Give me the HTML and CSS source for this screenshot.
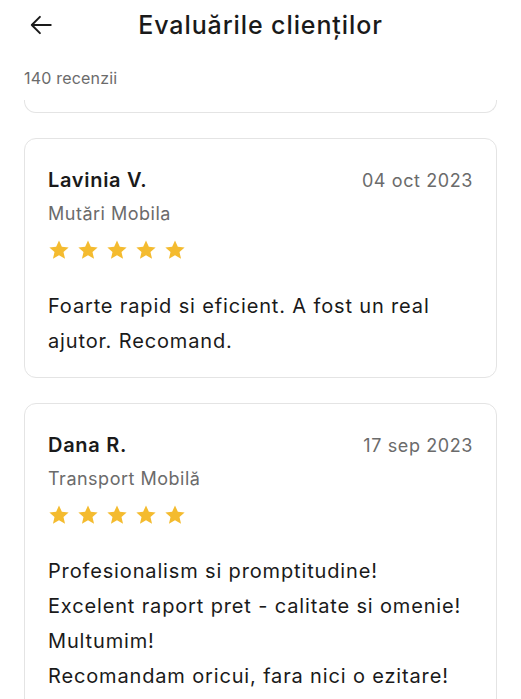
FILE: index.html
```html
<!DOCTYPE html>
<html lang="ro">
<head>
    <meta charset="UTF-8">
    <meta name="viewport" content="width=device-width, initial-scale=1.0">
    <title>Evaluările clienților</title>
    <link rel="stylesheet" href="styles.css">
</head>
<body>
    <header class="top-bar">
        <svg class="back-icon" viewBox="0 0 24 24" width="26" height="26">
            <path d="M21 12H3.5M11 4.5L3.5 12l7.5 7.5" fill="none" stroke="#1a1a1a" stroke-width="1.8" stroke-linecap="round" stroke-linejoin="round"/>
        </svg>
        <h1 class="page-title">Evaluările clienților</h1>
    </header>

    <main class="reviews">
        <div class="review-count">140 recenzii</div>

        <!-- previous card, scrolled up -->
        <div class="card card-cut"></div>

        <div class="card">
            <div class="card-head">
                <span class="reviewer">Lavinia V.</span>
                <span class="review-date">04 oct 2023</span>
            </div>
            <div class="service">Mutări Mobila</div>
            <div class="stars">
                <svg viewBox="0 0 24 24"><path d="M12 1.5l3.1 7 7.4.7-5.6 5 1.7 7.4L12 17.7l-6.6 3.9 1.7-7.4-5.6-5 7.4-.7z"/></svg>
                <svg viewBox="0 0 24 24"><path d="M12 1.5l3.1 7 7.4.7-5.6 5 1.7 7.4L12 17.7l-6.6 3.9 1.7-7.4-5.6-5 7.4-.7z"/></svg>
                <svg viewBox="0 0 24 24"><path d="M12 1.5l3.1 7 7.4.7-5.6 5 1.7 7.4L12 17.7l-6.6 3.9 1.7-7.4-5.6-5 7.4-.7z"/></svg>
                <svg viewBox="0 0 24 24"><path d="M12 1.5l3.1 7 7.4.7-5.6 5 1.7 7.4L12 17.7l-6.6 3.9 1.7-7.4-5.6-5 7.4-.7z"/></svg>
                <svg viewBox="0 0 24 24"><path d="M12 1.5l3.1 7 7.4.7-5.6 5 1.7 7.4L12 17.7l-6.6 3.9 1.7-7.4-5.6-5 7.4-.7z"/></svg>
            </div>
            <p class="review-text">Foarte rapid si eficient. A fost un real ajutor. Recomand.</p>
        </div>

        <div class="card">
            <div class="card-head">
                <span class="reviewer">Dana R.</span>
                <span class="review-date">17 sep 2023</span>
            </div>
            <div class="service">Transport Mobilă</div>
            <div class="stars">
                <svg viewBox="0 0 24 24"><path d="M12 1.5l3.1 7 7.4.7-5.6 5 1.7 7.4L12 17.7l-6.6 3.9 1.7-7.4-5.6-5 7.4-.7z"/></svg>
                <svg viewBox="0 0 24 24"><path d="M12 1.5l3.1 7 7.4.7-5.6 5 1.7 7.4L12 17.7l-6.6 3.9 1.7-7.4-5.6-5 7.4-.7z"/></svg>
                <svg viewBox="0 0 24 24"><path d="M12 1.5l3.1 7 7.4.7-5.6 5 1.7 7.4L12 17.7l-6.6 3.9 1.7-7.4-5.6-5 7.4-.7z"/></svg>
                <svg viewBox="0 0 24 24"><path d="M12 1.5l3.1 7 7.4.7-5.6 5 1.7 7.4L12 17.7l-6.6 3.9 1.7-7.4-5.6-5 7.4-.7z"/></svg>
                <svg viewBox="0 0 24 24"><path d="M12 1.5l3.1 7 7.4.7-5.6 5 1.7 7.4L12 17.7l-6.6 3.9 1.7-7.4-5.6-5 7.4-.7z"/></svg>
            </div>
            <p class="review-text">Profesionalism si promptitudine!<br>Excelent raport pret - calitate si omenie!<br>Multumim!<br>Recomandam oricui, fara nici o ezitare!</p>
        </div>
    </main>
</body>
</html>
```

FILE: styles.css
```css
body {
    margin: 0;
    padding: 0;
    font-family: Inter, "Noto Sans", sans-serif;
    color: #1a1a1a;
    background-color: #fff;
    overflow: hidden;
}
.top-bar {
    position: relative;
    display: flex;
    align-items: center;
    justify-content: center;
    height: 50px;
}
.back-icon {
    position: absolute;
    left: 28px;
    top: 12px;
}
.page-title {
    margin: 0;
    font-size: 25px;
    font-weight: 500;
    letter-spacing: 0.9px;
}
.reviews {
    padding: 0 24px;
}
.review-count {
    margin-top: 18px;
    font-size: 16px;
    line-height: 20px;
    letter-spacing: 0.2px;
    color: #6b6b6b;
}
.card {
    border: 1px solid #e4e4e4;
    border-radius: 12px;
    padding: 28px 23px 18px;
    margin-bottom: 25px;
}
.card-cut {
    border-top: none;
    border-top-left-radius: 0;
    border-top-right-radius: 0;
    height: 12px;
    padding: 0;
    margin-top: 12px;
}
.card-head {
    display: flex;
    justify-content: space-between;
    align-items: baseline;
}
.reviewer {
    font-size: 20px;
    line-height: 26px;
    font-weight: 600;
    letter-spacing: 0.7px;
}
.review-date {
    font-size: 18px;
    letter-spacing: 0.6px;
    color: #6b6b6b;
}
.service {
    margin-top: 8px;
    font-size: 18px;
    line-height: 25px;
    letter-spacing: 0.5px;
    color: #6b6b6b;
}
.stars {
    display: flex;
    gap: 7px;
    margin-top: 13px;
}
.stars svg {
    width: 22px;
    height: 22px;
    fill: #f4bb2f;
}
.review-text {
    margin: 28px 0 0;
    font-size: 20px;
    line-height: 35px;
    letter-spacing: 0.85px;
}
```
